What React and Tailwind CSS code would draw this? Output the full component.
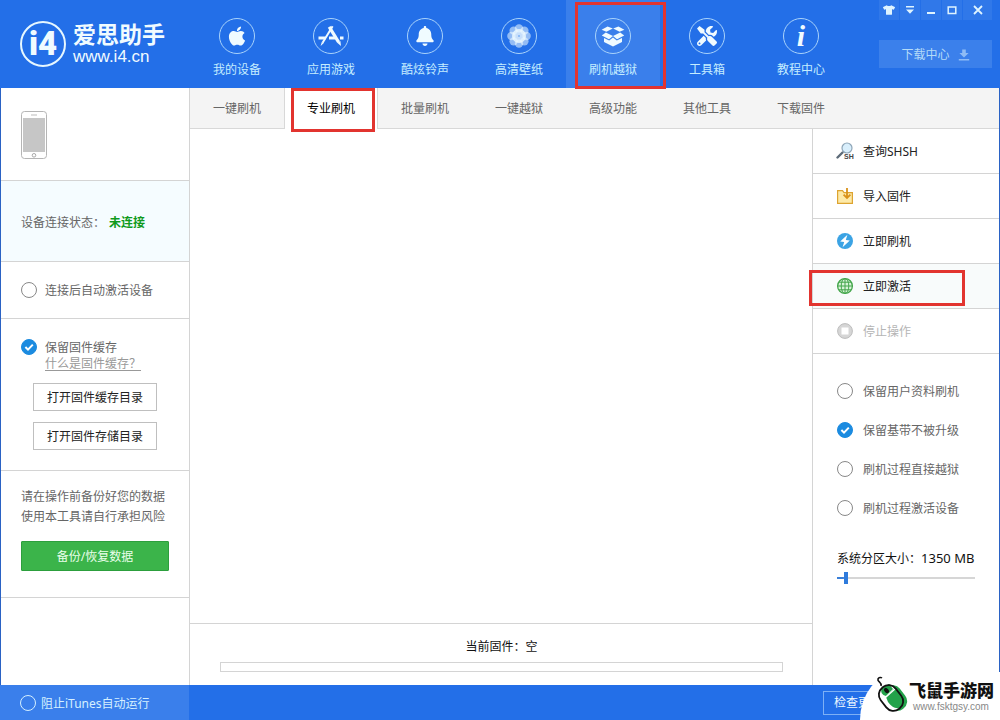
import { useState } from "react";
import { FaApple, FaBell, FaTools, FaTshirt } from "react-icons/fa";

function AppStoreIcon() {
  return (
    <svg viewBox="0 0 26 22" className="h-[22px] w-[26px]" fill="none" stroke="currentColor">
      <path d="M0.5 13H7.5M11 13H17M22 13H25.5" strokeWidth="3" />
      <path d="M11.2 1.8L20.6 17.2" strokeWidth="3.2" />
      <path d="M19.2 17.8L22.4 16L23 21Z" fill="currentColor" stroke="none" />
      <path d="M14.6 1.2L4.6 17.8" strokeWidth="2" />
      <path d="M3.8 17L5.6 18.2L2.6 21Z" fill="currentColor" stroke="none" />
    </svg>
  );
}

function FlowerIcon() {
  const petals = [0, 45, 90, 135, 180, 225, 270, 315];
  return (
    <svg viewBox="-12 -12 24 24" className="size-6" fill="currentColor">
      {petals.map((angle) => (
        <circle key={angle} cx="0" cy="-7.6" r="4.2" opacity="0.55" transform={`rotate(${angle})`} />
      ))}
      <circle r="7" opacity="0.8" />
      <circle r="1" fill="#7fb2f3" />
    </svg>
  );
}

function OpenBoxIcon() {
  return (
    <svg viewBox="0 0 24 22" className="h-[22px] w-6" fill="currentColor">
      <path d="M6.6 1.6L11.8 3.4L5.4 6.8L0.6 4.8Z" />
      <path d="M17.4 1.6L12.2 3.4L18.6 6.8L23.4 4.8Z" />
      <path d="M4.8 7.6L12 11L8 14.2L0.8 10.6Z" />
      <path d="M19.2 7.6L12 11L16 14.2L23.2 10.6Z" />
      <path d="M3 13L8.2 15.6L12 12.6L15.8 15.6L21 13V17L12 21.4L3 17Z" />
    </svg>
  );
}

const modules = [
  { label: "我的设备", icon: <FaApple size={22} /> },
  { label: "应用游戏", icon: <AppStoreIcon /> },
  { label: "酷炫铃声", icon: <FaBell size={20} /> },
  { label: "高清壁纸", icon: <FlowerIcon /> },
  { label: "刷机越狱", icon: <OpenBoxIcon />, active: true },
  { label: "工具箱", icon: <FaTools size={20} /> },
  {
    label: "教程中心",
    icon: <span className="font-['Liberation_Serif',serif] text-[30px] leading-8 font-bold italic">i</span>,
  },
];

const tabs = ["一键刷机", "专业刷机", "批量刷机", "一键越狱", "高级功能", "其他工具", "下载固件"];

function SearchShshIcon() {
  return (
    <svg viewBox="0 0 18 18" className="size-[18px]">
      <path d="M6.5 10.5L1.5 15.5" stroke="#5d6b78" strokeWidth="2.4" strokeLinecap="round" />
      <circle cx="11" cy="6" r="5" fill="#d9effc" stroke="#8fa6b8" strokeWidth="1.2" />
      <text x="8" y="16.5" fontSize="7" fontWeight="700" fill="#444" fontFamily="Liberation Sans, sans-serif">SH</text>
    </svg>
  );
}

function ImportIcon() {
  return (
    <svg viewBox="0 0 18 18" className="size-[18px]" fill="none" stroke="#dda431" strokeWidth="1.2">
      <path d="M1.6 3.6H6.5L8 5.6H16.4V16.4H1.6Z" fill="#fdeaa9" />
      <path d="M11 1V10.5M7.6 7.6L11 11L14.4 7.6" stroke="#d9921b" strokeWidth="1.8" />
    </svg>
  );
}

function FlashIcon() {
  return (
    <svg viewBox="0 0 18 18" className="size-[18px]">
      <circle cx="9" cy="9" r="8" fill="#3ba3e4" />
      <path d="M11.4 2.8L4.2 9.6L8.2 9.9L6.6 15.2L13.8 8.4L9.8 8.1Z" fill="#fff" />
    </svg>
  );
}

function GlobeIcon() {
  return (
    <svg viewBox="0 0 18 18" className="size-[18px]" fill="none" stroke="#43a64b" strokeWidth="1">
      <circle cx="9" cy="9" r="7.4" fill="#d8f2d8" strokeWidth="1.3" />
      <ellipse cx="9" cy="9" rx="3.8" ry="7.4" />
      <path d="M9 1.6V16.4M1.6 9H16.4M2.8 5.2H15.2M2.8 12.8H15.2" />
    </svg>
  );
}

function StopIcon() {
  return (
    <svg viewBox="0 0 18 18" className="size-[18px]">
      <circle cx="9" cy="9" r="7.4" fill="#d6d6d6" stroke="#bdbdbd" />
      <rect x="5.5" y="5.5" width="7" height="7" fill="#fff" />
    </svg>
  );
}

const actions = [
  { label: "查询SHSH", icon: <SearchShshIcon /> },
  { label: "导入固件", icon: <ImportIcon /> },
  { label: "立即刷机", icon: <FlashIcon /> },
  { label: "立即激活", icon: <GlobeIcon />, marked: true },
  { label: "停止操作", icon: <StopIcon />, disabled: true },
];

const flashOptions = [
  { label: "保留用户资料刷机", checked: false },
  { label: "保留基带不被升级", checked: true },
  { label: "刷机过程直接越狱", checked: false },
  { label: "刷机过程激活设备", checked: false },
];

function RoundCheck({ label, checked = false, tone = "gap-2 text-[#666]", ring = "border-[#888]" }) {
  return (
    <label className={`flex items-center leading-4 ${tone}`}>
      <span className="grid size-4 shrink-0">
        <input
          type="checkbox"
          defaultChecked={checked}
          className={`peer col-start-1 row-start-1 size-4 appearance-none rounded-full border checked:border-[#1b8be0] checked:bg-[#1b8be0] ${ring}`}
        />
        <svg viewBox="0 0 16 16" className="pointer-events-none invisible col-start-1 row-start-1 size-4 peer-checked:visible" fill="none" stroke="#fff" strokeWidth="2">
          <path d="M4.4 8L7 10.6L11.8 5.6" />
        </svg>
      </span>
      <span className="pt-0.5">{label}</span>
    </label>
  );
}

function WindowButtons() {
  const cell = "flex h-5 items-center justify-center bg-[#3078e9]";
  return (
    <div className="flex gap-px text-[#dff4ff]">
      <button aria-label="皮肤" className={`${cell} w-5`}><FaTshirt size={12} /></button>
      <button aria-label="菜单" className={`${cell} w-5`}>
        <svg viewBox="0 0 10 8" className="h-2 w-2.5" fill="currentColor"><path d="M1 0H9V1.6H1ZM1 3.4H9L5 7.8Z" /></svg>
      </button>
      <button aria-label="最小化" className={`${cell} w-5`}>
        <svg viewBox="0 0 10 10" className="size-2.5" fill="currentColor"><path d="M1 7H9V9H1Z" /></svg>
      </button>
      <button aria-label="最大化" className={`${cell} w-5`}>
        <svg viewBox="0 0 10 10" className="size-2.5" fill="none" stroke="currentColor" strokeWidth="1.5"><path d="M1.2 2H8.8V8.5H1.2Z" /></svg>
      </button>
      <button aria-label="关闭" className={`${cell} w-[29px]`}>
        <svg viewBox="0 0 10 10" className="size-2.5" fill="none" stroke="currentColor" strokeWidth="1.8"><path d="M1 1L9 9M9 1L1 9" /></svg>
      </button>
    </div>
  );
}

function Header() {
  return (
    <header className="flex h-[88px] shrink-0 bg-[#236fe8]">
      <div className="flex w-[190px] shrink-0 items-center gap-[7px] pl-5 text-[#f0fbff]">
        <div className="flex size-[46px] shrink-0 items-center justify-center rounded-full border-2 border-[#e6f7ff] font-['Roboto',sans-serif] text-[33px] leading-8 font-black">
          i4
        </div>
        <div className="flex flex-col gap-0.5 whitespace-nowrap">
          <span className="text-[23px] leading-6 font-bold">爱思助手</span>
          <span className="font-['Liberation_Sans',sans-serif] text-[17px] leading-[18px]">www.i4.cn</span>
        </div>
      </div>
      <nav className="flex flex-1">
        {modules.map((m) => (
          <a
            key={m.label}
            href="#"
            className={`relative flex w-[94px] flex-col items-center pt-[18px] text-[#c5edff] ${m.active ? "bg-[#3a7feb]" : ""}`}
          >
            <span className="flex size-9 items-center justify-center rounded-full border border-[#a9d3fb] text-[#f0fbff]">{m.icon}</span>
            <span className="mt-[7px] leading-[18px]">{m.label}</span>
            {m.active && <span className="pointer-events-none absolute top-0.5 -right-1.5 -bottom-px left-[9px] z-10 border-3 border-[#e2342f]" />}
          </a>
        ))}
      </nav>
      <div className="flex flex-col items-end gap-5 pr-2">
        <WindowButtons />
        <button className="flex h-7 w-[113px] items-center justify-center gap-2 bg-[#3b80eb] pt-0.5 text-[#b4dbf8]">
          下载中心
          <svg viewBox="0 0 12 12" className="size-3" fill="#8fbcf5">
            <path d="M4.2 0.5H7.8V4H10.6L6 8.6L1.4 4H4.2ZM0.8 10H11.2V11.6H0.8Z" />
          </svg>
        </button>
      </div>
    </header>
  );
}

function Sidebar() {
  const outline = "h-7 w-[124px] border border-[#bfbfbf] bg-white pt-0.5 text-[#222]";
  return (
    <aside className="w-[189px] shrink-0 border-r border-[#d4d4d4] text-[#666]">
      <section className="flex h-[93px] items-center border-b border-[#d4d4d4] pt-0.5 pl-5">
        <svg viewBox="0 0 26 48" className="h-12 w-[26px]">
          <rect x="0.5" y="0.5" width="25" height="47" rx="3" fill="#fff" stroke="#b5b5b5" />
          <path d="M10 4H16" stroke="#bbb" />
          <rect x="2" y="7" width="22" height="34" fill="#c6c6c6" />
          <circle cx="13" cy="44.3" r="1.8" fill="none" stroke="#aaa" />
        </svg>
      </section>
      <section className="flex h-[81px] items-center border-b border-[#d4d4d4] bg-[#f5fcff] pt-1 pl-5">
        设备连接状态：<strong className="ml-1 text-[#109a1c]">未连接</strong>
      </section>
      <section className="flex h-[57px] items-center border-b border-[#d4d4d4] pl-5">
        <RoundCheck label="连接后自动激活设备" />
      </section>
      <section className="border-b border-[#d4d4d4] pt-[19px] pb-5 pl-5">
        <RoundCheck label="保留固件缓存" checked />
        <a href="#" className="ml-6 block w-24 leading-4 text-[#999] underline underline-offset-2">什么是固件缓存？</a>
        <div className="mt-[11px] flex flex-col gap-[11px] pl-3">
          <button className={outline}>打开固件缓存目录</button>
          <button className={outline}>打开固件存储目录</button>
        </div>
      </section>
      <section className="border-b border-[#d4d4d4] px-5 pt-4 pb-[26px]">
        <p className="leading-5 whitespace-nowrap">
          请在操作前备份好您的数据
          <br />
          使用本工具请自行承担风险
        </p>
        <button className="mt-3.5 h-[30px] w-full rounded-[1px] border border-[#2c9f3d] bg-[#3bb44a] pt-0.5 text-[#eaffea]">备份/恢复数据</button>
      </section>
    </aside>
  );
}

function PartitionSlider() {
  const [size, setSize] = useState(1350);
  const min = 1000;
  const max = 8000;
  const percent = ((size - min) / (max - min)) * 100;
  return (
    <div className="mt-5 w-[138px]">
      <label htmlFor="partition" className="block pt-px leading-5 whitespace-nowrap text-[#111]">
        系统分区大小：<span className="text-[13px]">{size} MB</span>
      </label>
      <input
        id="partition"
        type="range"
        min={min}
        max={max}
        step="50"
        value={size}
        onChange={(e) => setSize(Number(e.target.value))}
        style={{ backgroundSize: `${percent}% 2px, 100% 2px` }}
        className="block h-[18px] w-full appearance-none bg-[linear-gradient(#3a7fd8,#3a7fd8),linear-gradient(#d6d6d6,#d6d6d6)] bg-left bg-no-repeat [&::-webkit-slider-thumb]:h-3 [&::-webkit-slider-thumb]:w-1 [&::-webkit-slider-thumb]:appearance-none [&::-webkit-slider-thumb]:bg-[#2f7bdc]"
      />
    </div>
  );
}

function ActionPanel() {
  return (
    <aside className="w-[187px] shrink-0 border-l border-[#d4d4d4]">
      {actions.map((a) => (
        <div key={a.label} className="relative border-b border-[#d4d4d4]">
          <button
            disabled={a.disabled}
            className={`flex h-11 w-full items-center gap-[9px] pl-[23px] ${a.disabled ? "text-[#b5b5b5]" : "text-[#222]"} ${a.marked ? "bg-[#f8fbfb]" : ""}`}
          >
            {a.icon}
            <span className="pt-0.5">{a.label}</span>
          </button>
          {a.marked && <span className="pointer-events-none absolute top-[6px] right-[34px] bottom-[2px] -left-1 border-3 border-[#e2342f]" />}
        </div>
      ))}
      <div className="pt-[17px] pl-6">
        {flashOptions.map((o) => (
          <div key={o.label} className="flex h-[39px] items-center">
            <RoundCheck label={o.label} checked={o.checked} tone="gap-2.5 text-[#666]" />
          </div>
        ))}
        <PartitionSlider />
      </div>
    </aside>
  );
}

function Workspace() {
  return (
    <div className="flex min-w-0 flex-1 flex-col">
      <nav className="flex h-[41px] shrink-0 bg-[#f4f4f4] text-[#666]">
        {tabs.map((t) => {
          const active = t === "专业刷机";
          return (
            <a
              key={t}
              href="#"
              className={`relative flex w-[94px] items-center justify-center ${
                active ? "border-x border-[#d8d8d8] bg-white text-black" : "border-b border-[#d8d8d8] pt-0.5"
              }`}
            >
              {t}
              {active && <span className="pointer-events-none absolute top-0 right-[2px] -bottom-[3px] left-[6px] border-3 border-[#e2342f]" />}
            </a>
          );
        })}
        <span className="flex-1 border-b border-[#d8d8d8]" />
      </nav>
      <div className="flex flex-1">
        <main className="flex min-w-0 flex-1 flex-col">
          <div className="flex-1" />
          <div className="flex h-[62px] flex-col border-t border-[#d4d4d4] pt-[13px] pr-[29px] pl-[30px]">
            <p id="firmware" className="text-center leading-5 text-[#111]">当前固件：空</p>
            <div role="progressbar" aria-labelledby="firmware" aria-valuenow={0} className="mt-[5px] h-2.5 border border-[#d4d4d4]" />
          </div>
        </main>
        <ActionPanel />
      </div>
    </div>
  );
}

function SiteBadge() {
  return (
    <div className="absolute right-0 bottom-0 flex h-12 w-[140px] items-center rounded-tl-[40px_48px] bg-white pl-[15px]">
      <svg viewBox="0 0 34 40" className="h-10 w-[34px] shrink-0">
        <rect x="10.5" y="8.5" width="19" height="27" rx="9" fill="#23a24a" transform="rotate(-38 20 22)" />
        <rect x="6.5" y="8.5" width="19" height="27" rx="9" fill="#fff" transform="rotate(-38 16 22)" />
        <path d="M11 21L20 12L27 20C30 25 28 31 24 32C20 33 16 30 13 26Z" fill="#23a24a" />
        <path d="M7 12L14 8L18 13L11 20C7 19 5 16 7 12Z" fill="#23a24a" />
        <path d="M10.5 21.5L20.5 12.5" stroke="#fff" strokeWidth="1.2" />
        <rect x="6.5" y="8.5" width="19" height="27" rx="9" fill="none" stroke="#111" strokeWidth="1.8" transform="rotate(-38 16 22)" />
        <ellipse cx="11.5" cy="14.5" rx="2" ry="3" fill="#111" transform="rotate(-38 11.5 14.5)" />
        <path d="M6 10C7 6 2 6 3 3C4 1.2 6 1.2 7 2" fill="none" stroke="#111" strokeWidth="1.6" />
      </svg>
      <div className="flex flex-col whitespace-nowrap">
        <span className="text-[17px] leading-5 font-black text-[#111]">飞鼠手游网</span>
        <span className="pl-1 font-['Liberation_Sans',sans-serif] text-[10px] leading-[11px] text-[#888]">www.fsktgsy.com</span>
      </div>
    </div>
  );
}

function Footer() {
  return (
    <footer className="relative flex h-[35px] shrink-0 items-center justify-between bg-[#236fe8] pr-[107px]">
      <div className="flex h-full w-[189px] items-center bg-[#3a7feb] pl-5">
        <RoundCheck label="阻止iTunes自动运行" tone="gap-[5px] text-[#d5f0ff]" ring="border-[#d5f0ff]" />
      </div>
      <button className="h-6 w-[70px] border border-[#7db0f5] text-[#eef9ff]">检查更新</button>
      <SiteBadge />
    </footer>
  );
}

export default function App() {
  return (
    <div className="flex min-h-screen flex-col bg-white font-['Noto_Sans','Noto_Sans_CJK_SC',sans-serif] text-xs">
      <Header />
      <div className="flex flex-1 border-x border-[#2a62c4]">
        <Sidebar />
        <Workspace />
      </div>
      <Footer />
    </div>
  );
}
